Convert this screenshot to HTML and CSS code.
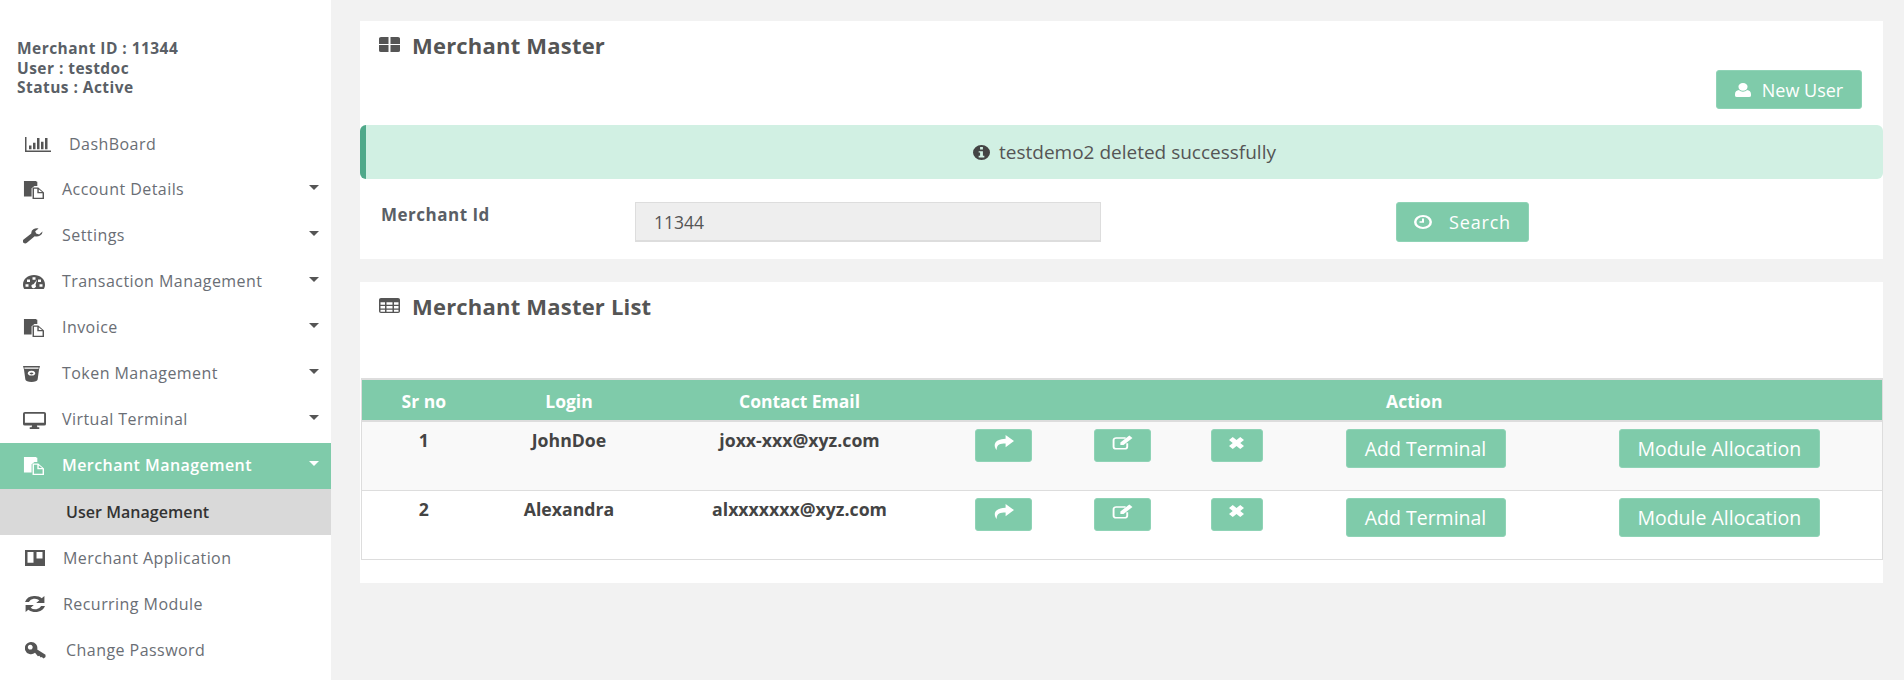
FILE: index.html
```html
<!DOCTYPE html>
<html lang="en">
<head>
<meta charset="utf-8">
<title>Merchant Master</title>
<link rel="stylesheet" href="styles.css">
</head>
<body>
<svg class="defs" width="0" height="0" aria-hidden="true">
  <symbol id="i-files" viewBox="0 0 22 22" preserveAspectRatio="none"><path d="M1 1h14v5h-3l-3 3v10H1z"/><path d="M1 0h13v2H1z"/><path fill-rule="evenodd" d="M10 8h6l6 6v8H10zm1.500 1.500v11h9v-5.500h-5.500V9.500zm5 .5v3.500H20z"/></symbol>
  <symbol id="i-caret" viewBox="0 0 12 6" preserveAspectRatio="none"><path d="M0 0h12L6 6z"/></symbol>
  <symbol id="i-share" viewBox="0 0 20 16" preserveAspectRatio="none"><path d="M12 0l8 6.500-8 6.500V9C7 9 3.500 9.500 3.500 16 .5 12 0 4.500 12 4z"/></symbol>
  <symbol id="i-edit" viewBox="0 0 20 18" preserveAspectRatio="none"><path fill="none" stroke="currentColor" stroke-width="1.800" d="M13 3.500H4A2.500 2.500 0 0 0 1.500 6v8A2.500 2.500 0 0 0 4 16.500h8a2.500 2.500 0 0 0 2.500-2.500v-4"/><path d="M16.500.5l3 3L11 12H8V9z"/></symbol>
  <symbol id="i-times" viewBox="0 0 14 14" preserveAspectRatio="none"><path d="M3.500 0L7 3.500 10.500 0 14 3.500 10.500 7 14 10.500 10.500 14 7 10.500 3.500 14 0 10.500 3.500 7 0 3.500z"/></symbol>
</svg>
<div class="app">
  <aside class="sidebar">
    <div class="account">
      <div>Merchant ID : 11344</div>
      <div>User : testdoc</div>
      <div>Status : Active</div>
    </div>
    <nav class="menu">
      <a class="item item-dash">
        <svg class="ico ico-dash" viewBox="0 0 26 16" preserveAspectRatio="none"><path d="M0 0h1.500v14.500H26V16H0z"/><path d="M4 9h2.500v4H4zM8 6h2.500v7H8zM12 1h2.500v12H12zM16 5h2.500v8H16zM20 1h2.500v12H20z"/></svg>
        <span>DashBoard</span>
      </a>
      <a class="item item-drop"><svg class="ico"><use href="#i-files"/></svg><span>Account Details</span><svg class="caret"><use href="#i-caret"/></svg></a>
      <a class="item item-drop">
        <svg class="ico ico-wrench" viewBox="1 1 20.500 20" preserveAspectRatio="none"><path d="M21 5.500a6 6 0 0 1-8 5.700L5 19.500a2.500 2.500 0 0 1-3.500-.2 2.500 2.500 0 0 1-.2-3.500l8.200-8A6 6 0 0 1 17 1.500L13.500 5l1 3 3 1z"/></svg>
        <span>Settings</span><svg class="caret"><use href="#i-caret"/></svg>
      </a>
      <a class="item item-drop">
        <svg class="ico ico-gauge" viewBox="0 1 22 16" preserveAspectRatio="none"><path fill-rule="evenodd" d="M11 1c6 0 11 4.500 11 11 0 2-.5 3.500-1.300 5H1.300C.5 15.500 0 14 0 12 0 5.500 5 1 11 1zM9.500 3.500v3h3v-3zM4 6v3h3V6zM15 6v3h3V6zM2.500 11.500v3h3v-3zM16.500 11.500v3h3v-3zM14 6.500l-3.500 5a2.200 2.200 0 1 0 2 1z"/></svg>
        <span>Transaction Management</span><svg class="caret"><use href="#i-caret"/></svg>
      </a>
      <a class="item item-drop"><svg class="ico"><use href="#i-files"/></svg><span>Invoice</span><svg class="caret"><use href="#i-caret"/></svg></a>
      <a class="item item-drop">
        <svg class="ico ico-token" viewBox="2 1 18 20" preserveAspectRatio="none"><path fill-rule="evenodd" d="M2 1h18l-1 4-1.500 13c-.2 2-3 3-6.500 3s-6.300-1-6.500-3L3 5zM11 7a4 3 0 1 0 .01 0zM11 9a2 1.200 0 1 1-.01 0zM3.500 3v1.500h15V3z"/></svg>
        <span>Token Management</span><svg class="caret"><use href="#i-caret"/></svg>
      </a>
      <a class="item item-drop">
        <svg class="ico ico-desk" viewBox="0 0 24 20" preserveAspectRatio="none"><path fill-rule="evenodd" d="M2 0h20a2 2 0 0 1 2 2v12a2 2 0 0 1-2 2H14.500l.5 2h2v2H7v-2h2l.5-2H2a2 2 0 0 1-2-2V2a2 2 0 0 1 2-2zm0 2v10.500h20V2z"/></svg>
        <span>Virtual Terminal</span><svg class="caret"><use href="#i-caret"/></svg>
      </a>
      <a class="item item-drop active"><svg class="ico"><use href="#i-files"/></svg><span>Merchant Management</span><svg class="caret"><use href="#i-caret"/></svg></a>
      <a class="item sub"><span>User Management</span></a>
      <a class="item item-plain">
        <svg class="ico" viewBox="0 0 20 20" preserveAspectRatio="none"><path fill-rule="evenodd" d="M0 0h20v20H0zm2.500 2.500v13.500h6V2.500zm9 0v8h6v-8z"/></svg>
        <span>Merchant Application</span>
      </a>
      <a class="item item-plain">
        <svg class="ico" viewBox="1.500 2 17 16" preserveAspectRatio="none"><path d="M10 2c2.200 0 4.300.9 5.700 2.300L18 2v7h-7l2.700-2.700A5.500 5.500 0 0 0 4.800 8H1.500A8.600 8.600 0 0 1 10 2zM2 11h7l-2.700 2.700A5.500 5.500 0 0 0 15.200 12h3.300A8.600 8.600 0 0 1 4.300 15.700L2 18z"/></svg>
        <span>Recurring Module</span>
      </a>
      <a class="item item-key">
        <svg class="ico" viewBox="0 0 22 18" preserveAspectRatio="none"><path fill-rule="evenodd" d="M6.500 0A6.500 6.500 0 0 1 12.800 8l8.700 5.500V16l-2 1.500-2-1.500-1 .5-1.500-2-1.500.5-3-3.500A6.500 6.500 0 1 1 6.500 0zM5.500 3a2.500 2.500 0 1 0 .01 0z"/></svg>
        <span>Change Password</span>
      </a>
    </nav>
  </aside>
  <main class="content">
    <section class="panel panel-master">
      <h2 class="title">
        <svg class="title-ico" viewBox="0 0 21 20" preserveAspectRatio="none"><path d="M0 2a2 2 0 0 1 2-2h7.500v9.200H0zM11.500 0H19a2 2 0 0 1 2 2v7.200h-9.500zM0 10.800h9.500V20H2a2 2 0 0 1-2-2zM11.500 10.800H21V18a2 2 0 0 1-2 2h-7.500z"/></svg>
        Merchant Master
      </h2>
      <div class="toolbar">
        <button class="btn btn-new">
          <svg class="btn-ico" viewBox="0 0 16 18" preserveAspectRatio="none"><path d="M8 0a4.500 4.500 0 0 1 4.500 5c0 2.500-2 5-4.500 5S3.500 7.500 3.500 5A4.500 4.500 0 0 1 8 0zM4 9c1 1.500 2.500 2.200 4 2.200S11 10.500 12 9c2.500.3 4 2 4 5.500V16a2 2 0 0 1-2 2H2a2 2 0 0 1-2-2v-1.500C0 11 1.500 9.300 4 9z"/></svg>
          New User
        </button>
      </div>
      <div class="alert">
        <svg class="alert-ico" viewBox="0 0 18 18" preserveAspectRatio="none"><path fill-rule="evenodd" d="M9 0a9 9 0 1 1 0 18A9 9 0 0 1 9 0zM7.500 2.500v3h3v-3zM6 7.500V9h1.500v4H6v2h6v-2h-1.500V7.500z"/></svg>
        testdemo2 deleted successfully
      </div>
      <form class="search-row">
        <label class="field-label">Merchant Id</label>
        <input class="field-input" value="11344" disabled>
        <button class="btn btn-search" type="button">
          <svg class="btn-ico btn-ico-clock" viewBox="0 0 18 18" preserveAspectRatio="none"><path fill-rule="evenodd" d="M9 0a9 9 0 1 1 0 18A9 9 0 0 1 9 0zm0 2.500a6.500 6.500 0 1 0 0 13 6.500 6.500 0 0 0 0-13zM8 4.500h2V10H5.500V8H8z"/></svg>
          Search
        </button>
      </form>
    </section>
    <section class="panel panel-list">
      <h2 class="title">
        <svg class="title-ico" viewBox="0 0 21 18" preserveAspectRatio="none"><path fill-rule="evenodd" d="M2 0h17a2 2 0 0 1 2 2v14a2 2 0 0 1-2 2H2a2 2 0 0 1-2-2V2a2 2 0 0 1 2-2zm-.5 5v3h4.500V5zm6 0v3h6V5zm7.500 0v3h4.500V5zM1.500 9.500v3h4.500v-3zm6 0v3h6v-3zm7.500 0v3h4.500v-3zM1.500 14v2.500h4.500V14zm6 0v2.500h6V14zm7.500 0v2.500h4.500V14z"/></svg>
        Merchant Master List
      </h2>
      <table class="grid">
        <colgroup>
          <col class="c-sr"><col class="c-login"><col class="c-email"><col class="c-share"><col class="c-edit"><col class="c-del"><col class="c-add"><col class="c-mod">
        </colgroup>
        <thead>
          <tr><th>Sr no</th><th>Login</th><th>Contact Email</th><th colspan="5">Action</th></tr>
        </thead>
        <tbody>
          <tr class="odd">
            <td>1</td><td>JohnDoe</td><td>joxx-xxx@xyz.com</td>
            <td><button class="btn btn-icon"><svg class="act-ico"><use href="#i-share"/></svg></button></td>
            <td><button class="btn btn-icon"><svg class="act-ico"><use href="#i-edit"/></svg></button></td>
            <td><button class="btn btn-icon btn-del"><svg class="act-ico act-x"><use href="#i-times"/></svg></button></td>
            <td><button class="btn btn-text btn-add">Add Terminal</button></td>
            <td class="cell-mod"><button class="btn btn-text btn-mod">Module Allocation</button></td>
          </tr>
          <tr>
            <td>2</td><td>Alexandra</td><td>alxxxxxxx@xyz.com</td>
            <td><button class="btn btn-icon"><svg class="act-ico"><use href="#i-share"/></svg></button></td>
            <td><button class="btn btn-icon"><svg class="act-ico"><use href="#i-edit"/></svg></button></td>
            <td><button class="btn btn-icon btn-del"><svg class="act-ico act-x"><use href="#i-times"/></svg></button></td>
            <td><button class="btn btn-text btn-add">Add Terminal</button></td>
            <td class="cell-mod"><button class="btn btn-text btn-mod">Module Allocation</button></td>
          </tr>
        </tbody>
      </table>
    </section>
  </main>
</div>
</body>
</html>
```
FILE: styles.css
```css
* { box-sizing: border-box; }
html, body { margin: 0; height: 100%; }
body {
  font-family: "Open Sans", "Liberation Sans", sans-serif;
  background: #f2f2f2;
  color: #555;
  overflow: hidden;
}
.defs { position: absolute; }
.app { display: flex; height: 680px; }

.sidebar { width: 331px; flex: none; background: #fff; padding-top: 38px; }
.account { padding: 1px 0 0 17px; font-size: 15.5px; letter-spacing: .45px; font-weight: 700; line-height: 19.5px; color: #5a5f66; height: 83px; }
.menu { display: flex; flex-direction: column; }
.item { display: flex; align-items: center; height: 46px; padding-left: 23px; font-size: 16px; letter-spacing: .45px; color: #6a6e75; position: relative; }
.item span { margin-left: 18px; }
.item-drop span { position: relative; top: -1px; }
.ico { width: 21px; height: 18px; fill: #555; flex: none; }
.ico-wrench { width: 20px; height: 16px; margin-right: 1px; }
.ico-gauge { width: 22px; height: 14px; margin-right: -1px; }
.ico-token { width: 17px; height: 16px; margin-right: 4px; }
.ico-desk { width: 23px; height: 17px; margin-right: -2px; }
.caret { position: absolute; left: 309px; top: 18px; width: 10px; height: 5px; fill: #555; }
.item-dash { padding-left: 25px; }
.ico-dash { width: 26px; height: 15px; }
.item-plain { padding-left: 25px; }
.item-plain .ico { width: 20px; height: 16px; }
.item-key { padding-left: 25px; }
.item-key .ico { width: 21px; height: 17px; }
.item-key span { margin-left: 20px; }
.active { background: #7fcbaa; color: #fff; font-weight: 600; }
.active .ico, .active .caret { fill: #fff; }
.sub { background: #d9d9d9; color: #333; padding-left: 66px; font-weight: 600; letter-spacing: .05px; }
.sub span { margin-left: 0; }

.content { flex: 1; padding: 21px 21px 0 29px; display: flex; flex-direction: column; gap: 23px; min-width: 0; }
.panel { background: #fff; }
.panel-master { height: 238px; }
.panel-list { height: 301px; }
.title { display: flex; align-items: center; gap: 12px; margin: 0; height: 49px; padding: 0 0 2px 19px; font-size: 22px; letter-spacing: .2px; font-weight: 700; color: #555; }
.title-ico { width: 21px; height: 15px; fill: #555; flex: none; }

.toolbar { display: flex; justify-content: flex-end; padding-right: 21px; }
.btn { border: 1px solid #8fd3b6; border-radius: 3px; background: #7fcbaa; color: #fff; font-family: inherit; font-size: 18px; display: inline-flex; align-items: center; justify-content: center; padding: 0; }
.btn-new { width: 146px; height: 39px; gap: 11px; }
.btn-ico { width: 16px; height: 14px; fill: #fff; }
.btn-ico-clock { width: 18px; height: 14px; }

.alert { margin-top: 16px; height: 54px; border-left: 6px solid #4fa98a; border-radius: 6px; background: #d1f0e3; display: flex; align-items: center; justify-content: center; gap: 9px; font-size: 19px; color: #555; }
.alert-ico { width: 17px; height: 15px; fill: #444; }

.search-row { display: flex; align-items: flex-start; margin-top: 23px; }
.field-label { width: 275px; padding: 1px 0 0 21px; font-size: 17px; letter-spacing: .5px; font-weight: 700; color: #5a5f66; }
.field-input { width: 466px; height: 40px; border: 2px solid #ddd; border-width: 1px 1px 2px; background: #eee; padding: 0 18px; font-family: inherit; font-size: 17.5px; color: #555; opacity: 1; }
.btn-search { width: 133px; height: 40px; margin-left: 295px; gap: 17px; letter-spacing: .8px; }

.grid { border-collapse: collapse; table-layout: fixed; width: 1521px; margin: 47px 1px 0; border: 1px solid #ddd; border-top: 2px solid #ddd; font-size: 17.7px; }
.c-sr { width: 124px; }
.c-login { width: 167px; }
.c-email { width: 294px; }
.c-share { width: 113px; }
.c-edit { width: 125px; }
.c-del { width: 104px; }
.c-add { width: 274px; }
.c-mod { width: 320px; }
.grid th { height: 42px; background: #7fcbaa; color: #fff; font-weight: 700; font-size: 17.5px; border-bottom: 2px solid #ddd; text-align: center; padding: 1px 0 0; }
.grid td { height: 69px; padding: 6px 0 0; text-align: center; vertical-align: top; font-weight: 700; border-bottom: 1px solid #ddd; color: #444; }
.grid .cell-mod { padding-right: 6px; }
.odd td { background: #f9f9f9; }
.btn-icon { width: 57px; height: 33px; margin-top: 1px; }
.btn-del { width: 52px; }
.act-ico { width: 21px; height: 15px; fill: #fff; color: #fff; margin-bottom: 6px; }
.act-x { width: 15px; height: 12px; }
.btn-text { height: 39px; margin-top: 1px; font-weight: 400; font-size: 19.5px; }
.btn-add { width: 160px; }
.btn-mod { width: 201px; }
```
